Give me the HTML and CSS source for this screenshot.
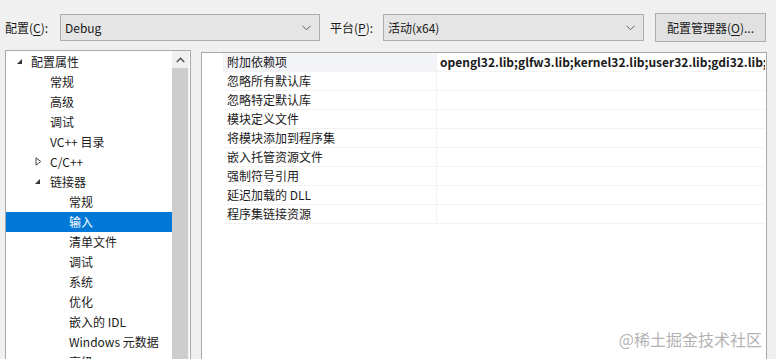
FILE: index.html
```html
<!DOCTYPE html>
<html lang="zh-CN">
<head>
<meta charset="utf-8">
<link rel="stylesheet" href="styles.css">
</head>
<body>
<div class="window">
  <div class="toolbar">
    <span class="label label-config">配置(<u>C</u>):</span>
    <div class="combo combo-config"><span>Debug</span><svg class="chev" width="9" height="6" viewBox="0 0 9 6"><path d="M0.5 0.8 L4.5 4.8 L8.5 0.8" fill="none" stroke="#606060" stroke-width="1"/></svg></div>
    <span class="label label-platform">平台(<u>P</u>):</span>
    <div class="combo combo-platform"><span>活动(x64)</span><svg class="chev" width="9" height="6" viewBox="0 0 9 6"><path d="M0.5 0.8 L4.5 4.8 L8.5 0.8" fill="none" stroke="#606060" stroke-width="1"/></svg></div>
    <button class="btn">配置管理器(<u>O</u>)...</button>
  </div>
  <div class="main">
    <div class="tree">
      <ul class="items">
        <li class="item lvl0"><svg class="tri" width="7" height="7" viewBox="0 0 7 7"><path d="M6 1 L6 6 L1 6 Z" fill="#333"/></svg>配置属性</li>
        <li class="item lvl1">常规</li>
        <li class="item lvl1">高级</li>
        <li class="item lvl1">调试</li>
        <li class="item lvl1">VC++ 目录</li>
        <li class="item lvl1"><svg class="tri tri-c" width="7" height="9" viewBox="0 0 7 9"><path d="M1 0.8 L5.8 4.5 L1 8.2 Z" fill="none" stroke="#444" stroke-width="1"/></svg>C/C++</li>
        <li class="item lvl1"><svg class="tri" width="7" height="7" viewBox="0 0 7 7"><path d="M6 1 L6 6 L1 6 Z" fill="#333"/></svg>链接器</li>
        <li class="item lvl2">常规</li>
        <li class="item lvl2 selected">输入</li>
        <li class="item lvl2">清单文件</li>
        <li class="item lvl2">调试</li>
        <li class="item lvl2">系统</li>
        <li class="item lvl2">优化</li>
        <li class="item lvl2">嵌入的 IDL</li>
        <li class="item lvl2">Windows 元数据</li>
        <li class="item lvl2">高级</li>
      </ul>
      <div class="scrollbar">
        <div class="sb-up"><svg width="9" height="6" viewBox="0 0 9 6"><path d="M0.8 5 L4.5 1.3 L8.2 5" fill="none" stroke="#505050" stroke-width="1.4"/></svg></div>
        <div class="sb-thumb"></div>
      </div>
    </div>
    <div class="grid">
      <div class="row first"><div class="name">附加依赖项</div><div class="value">opengl32.lib;glfw3.lib;kernel32.lib;user32.lib;gdi32.lib;winspool.lib</div></div>
      <div class="row"><div class="name">忽略所有默认库</div><div class="value"></div></div>
      <div class="row"><div class="name">忽略特定默认库</div><div class="value"></div></div>
      <div class="row"><div class="name">模块定义文件</div><div class="value"></div></div>
      <div class="row"><div class="name">将模块添加到程序集</div><div class="value"></div></div>
      <div class="row"><div class="name">嵌入托管资源文件</div><div class="value"></div></div>
      <div class="row"><div class="name">强制符号引用</div><div class="value"></div></div>
      <div class="row"><div class="name">延迟加载的 DLL</div><div class="value"></div></div>
      <div class="row last"><div class="name">程序集链接资源</div><div class="value"></div></div>
      <div class="watermark">@稀土掘金技术社区</div>
    </div>
  </div>
</div>
</body>
</html>
```

FILE: styles.css
```css
html, body {
  margin: 0;
  padding: 0;
  background: #f0f0f0;
  width: 776px;
  height: 359px;
  overflow: hidden;
}
body {
  font-family: "Noto Sans CJK SC", "Noto Sans", sans-serif;
  font-size: 12px;
  color: #1a1a1a;
}
.window {
  display: flex;
  flex-direction: column;
  height: 359px;
}
.toolbar {
  display: flex;
  align-items: center;
  height: 27px;
  padding: 14px 0 0 5px;
}
.label {
  line-height: 27px;
  white-space: nowrap;
}
.label-config { width: 55px; }
.label-platform { width: 53px; margin-left: 10px; }
.combo {
  box-sizing: border-box;
  height: 27px;
  border: 1px solid #adadad;
  background: #e5e5e5;
  display: flex;
  align-items: center;
  justify-content: space-between;
  padding: 0 8px 0 4px;
}
.combo-config { width: 260px; }
.combo-platform { width: 261px; }
.chev { margin-top: 1px; }
.btn {
  box-sizing: border-box;
  margin-left: 11px;
  width: 111px;
  height: 29px;
  border: 1px solid #adadad;
  background: #e1e1e1;
  font-family: inherit;
  font-size: 12px;
  color: #1a1a1a;
  padding: 0;
}
u { text-decoration: underline; text-underline-offset: 2px; }
.main {
  display: flex;
  flex: 1;
  margin-top: 9px;
  padding-left: 5px;
  min-height: 0;
}
.tree {
  box-sizing: border-box;
  width: 186px;
  border: 1px solid #a8a8a8;
  border-bottom: none;
  background: #fff;
  display: flex;
  overflow: hidden;
}
.items {
  list-style: none;
  margin: 0;
  padding: 1px 0 0 0;
  flex: 1;
  min-width: 0;
}
.item {
  height: 20px;
  line-height: 20px;
  position: relative;
  white-space: nowrap;
}
.lvl0 { padding-left: 25px; }
.lvl1 { padding-left: 44px; }
.lvl2 { padding-left: 63px; }
.tri {
  position: absolute;
  top: 6px;
}
.lvl0 .tri { left: 10px; }
.lvl1 .tri { left: 28px; }
.lvl1 .tri-c { left: 29px; top: 5px; }
.selected {
  background: #0078d7;
  color: #fff;
}
.scrollbar {
  width: 17px;
  margin-right: 1px;
  background: #f0f0f0;
  display: flex;
  flex-direction: column;
}
.sb-up {
  height: 17px;
  display: flex;
  align-items: center;
  justify-content: center;
}
.sb-thumb {
  flex: 1;
  margin: 0 1px 0 0;
  background: #cdcdcd;
}
.grid {
  box-sizing: border-box;
  position: relative;
  margin-left: 10px;
  margin-top: 2px;
  width: 566px;
  border: 1px solid #a8a8a8;
  border-bottom: none;
  background: #fff;
  padding: 0 1px 0 21px;
  overflow: hidden;
}
.row {
  display: flex;
  height: 19px;
  line-height: 18px;
  box-sizing: border-box;
  border-bottom: 1px solid #f3f3f3;
}
.name {
  width: 214px;
  padding-left: 4px;
  box-sizing: border-box;
  flex: none;
  white-space: nowrap;
  border-right: 1px solid #f3f3f3;
}
.first .name { background: #f3f4f8; }
.value {
  flex: 1;
  padding-left: 3px;
  font-weight: bold;
  white-space: nowrap;
  overflow: hidden;
  font-family: "Noto Sans CJK SC", "Noto Sans", sans-serif;
}
.watermark {
  position: absolute;
  right: 4px;
  bottom: 8px;
  font-size: 16px;
  color: #b3b3b3;
  white-space: nowrap;
}
```
